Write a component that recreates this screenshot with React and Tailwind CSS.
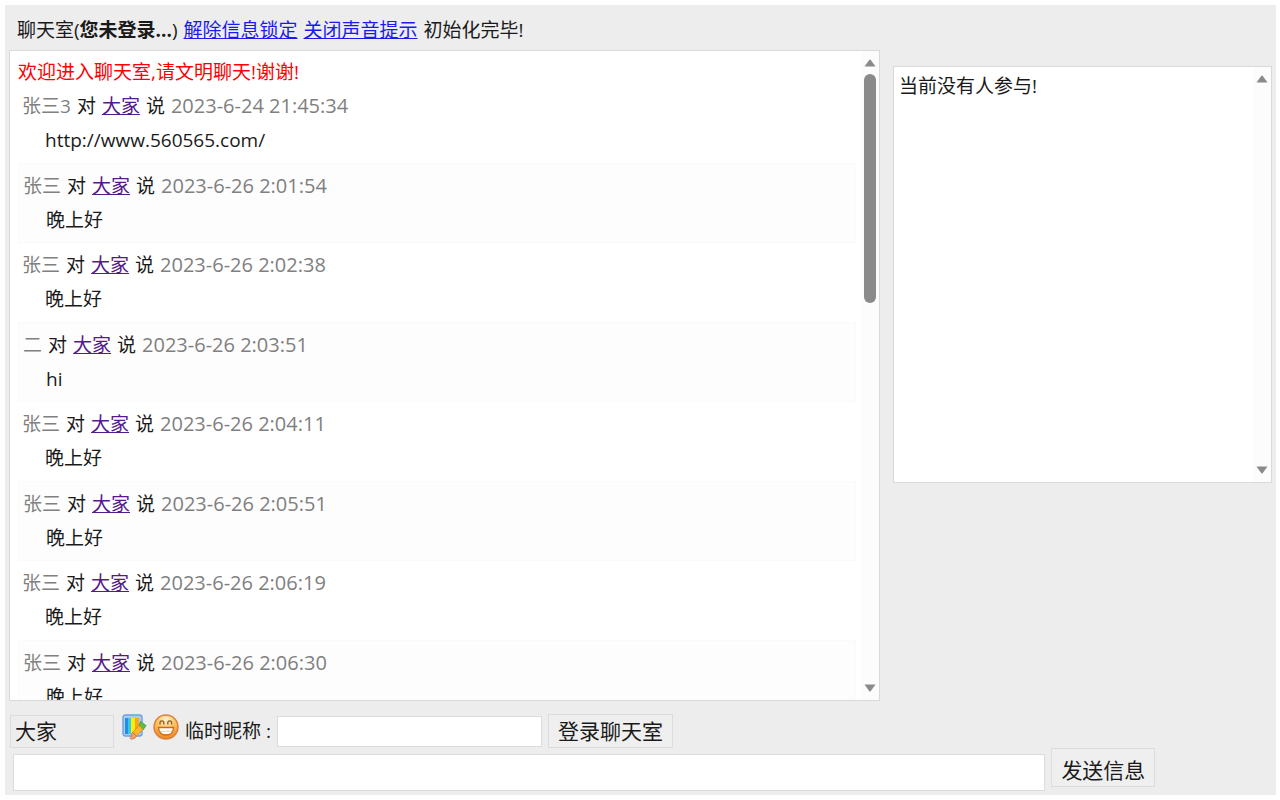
import { useState } from "react";

const MESSAGES = [
  { id: 1, from: "张三3", time: "2023-6-24 21:45:34", text: "http://www.560565.com/" },
  { id: 2, from: "张三", time: "2023-6-26 2:01:54", text: "晚上好" },
  { id: 3, from: "张三", time: "2023-6-26 2:02:38", text: "晚上好" },
  { id: 4, from: "二", time: "2023-6-26 2:03:51", text: "hi" },
  { id: 5, from: "张三", time: "2023-6-26 2:04:11", text: "晚上好" },
  { id: 6, from: "张三", time: "2023-6-26 2:05:51", text: "晚上好" },
  { id: 7, from: "张三", time: "2023-6-26 2:06:19", text: "晚上好" },
  { id: 8, from: "张三", time: "2023-6-26 2:06:30", text: "晚上好" },
];

function Arrow({ down }) {
  return (
    <svg viewBox="0 0 12 8" className="w-3 h-2 shrink-0" fill="#8a8a8a">
      {down ? <path d="M0.5 0.5h11L6.8 7a1 1 0 0 1-1.6 0z" /> : <path d="M0.5 7.5h11L6.8 1a1 1 0 0 0-1.6 0z" />}
    </svg>
  );
}

function ScrollTrack({ thumb }) {
  return (
    <div className="w-[18px] shrink-0 flex flex-col items-center justify-between bg-[#fcfcfc] py-2" aria-hidden="true">
      <Arrow />
      {thumb && (
        <div className="flex-1 w-3 py-[7px]">
          <div className="h-[38%] rounded-full bg-[#8a8a8a]" />
        </div>
      )}
      <Arrow down />
    </div>
  );
}

function PaletteIcon() {
  return (
    <svg viewBox="0 0 25 26" className="w-[25px] h-[26px]">
      <rect x="1" y="1" width="19" height="21" rx="2.5" fill="#a9cdf5" stroke="#6f9fe0" strokeWidth="1.4" />
      <rect x="3" y="4" width="3" height="16" fill="#1f8fe8" />
      <rect x="6" y="4" width="3" height="16" fill="#35c8ee" />
      <rect x="9" y="4" width="4" height="16" fill="#ffee00" />
      <rect x="13" y="4" width="4" height="16" fill="#ffa31a" />
      <path d="M18.5 7.5l5.5 4-3 4.5-4-4z" fill="#5fbf45" stroke="#3a9438" strokeWidth="0.8" />
      <path d="M17 11.5l4 4-6.5 6.5-4-3.5z" fill="#ffb62e" stroke="#d08a1c" strokeWidth="0.8" />
      <path d="M10.5 18.5l4 3.5c-1 2.5-3.5 3.3-5.5 3-1-.2-1-1.2-.5-1.6 1-.8.7-3.6 2-4.9z" fill="#f0a070" stroke="#c9703c" strokeWidth="0.8" />
    </svg>
  );
}

function SmileIcon() {
  return (
    <svg viewBox="0 0 26 26" className="w-[26px] h-[26px]">
      <defs>
        <radialGradient id="face" cx="0.5" cy="0.2" r="0.85">
          <stop offset="0" stopColor="#fff2cf" />
          <stop offset="0.5" stopColor="#fbbf5c" />
          <stop offset="1" stopColor="#ea7a1c" />
        </radialGradient>
      </defs>
      <circle cx="13" cy="13" r="12" fill="url(#face)" stroke="#dd8038" strokeWidth="1.4" />
      <path d="M7 10.5V8.8a1.9 1.9 0 0 1 3.8 0v1.7M14.8 10.5V8.8a1.9 1.9 0 0 1 3.8 0v1.7" fill="none" stroke="#8a5a20" strokeWidth="1.3" />
      <path d="M5.5 13.5h15c0 4.5-3 7.5-7.5 7.5s-7.5-3-7.5-7.5z" fill="#fff" stroke="#c96a18" strokeWidth="1.3" />
      <path d="M6.5 17.3h13" stroke="#f0c090" strokeWidth="0.8" />
    </svg>
  );
}

function Message({ msg, striped }) {
  return (
    <li className={striped ? "border border-[#fafafa] bg-[#fdfdfd] pl-1 pt-[5px] pb-1" : "pl-1 py-[5px]"}>
      <p className="flex gap-[6px] leading-[34px] text-[#808080]">
        <span>{msg.from}</span>
        <span className="text-[#1a1a1a]">对</span>
        <a href="#" className="text-[#551a8b] underline">大家</a>
        <span className="text-[#1a1a1a]">说</span>
        <span className="text-[20px]">{msg.time}</span>
      </p>
      <p className="pl-[23px] leading-[35px]">{msg.text}</p>
    </li>
  );
}

export default function App() {
  const [nickname, setNickname] = useState("");
  const [text, setText] = useState("");

  return (
    <div className="h-screen bg-white py-[5px] pl-[5px] pr-1 text-[19px] text-[#1a1a1a] font-['Open_Sans','Noto_Sans_CJK_SC',sans-serif]">
      <div className="h-full flex flex-col bg-[#ededed] px-1 pb-1">
        <header className="h-[45px] shrink-0 flex items-center gap-[6px] pl-2 pt-[6px] whitespace-nowrap">
          <span>聊天室(<b>您未登录...</b>)</span>
          <a href="#" className="text-[#1a1aee] underline">解除信息锁定</a>
          <a href="#" className="text-[#1a1aee] underline">关闭声音提示</a>
          <span>初始化完毕!</span>
        </header>

        <div className="flex-1 min-h-0 grid grid-cols-[871fr_379fr] grid-rows-[minmax(0,1fr)] gap-[13px]">
          <main className="flex border border-[#d9d9d9] bg-white overflow-hidden">
            <div className="flex-1 overflow-hidden pl-2 pr-[5px] pt-[9px]">
              <p className="leading-6 text-[#ff0000]">欢迎进入聊天室,请文明聊天!谢谢!</p>
              <ul>
                {MESSAGES.map((msg, i) => (
                  <Message key={msg.id} msg={msg} striped={i % 2 === 1} />
                ))}
              </ul>
            </div>
            <ScrollTrack thumb />
          </main>

          <aside className="mt-4 h-[417px] flex border border-[#d9d9d9] bg-white">
            <p className="flex-1 pl-[5px] pt-[7px] leading-6">当前没有人参与!</p>
            <ScrollTrack />
          </aside>
        </div>

        {/* Nickname and login */}
        <div className="shrink-0 flex items-center gap-[6px] pt-[13px] pl-px">
          <select aria-label="聊天对象" className="appearance-none w-[104px] h-[33px] mr-[2px] pl-1 border border-[#dcdcdc] bg-[#ededed] text-[21px] leading-[30px]">
            <option>大家</option>
          </select>
          <button type="button" aria-label="颜色" className="mb-2"><PaletteIcon /></button>
          <button type="button" aria-label="表情" className="mb-2"><SmileIcon /></button>
          <label htmlFor="nickname" className="whitespace-nowrap">临时昵称 :</label>
          <input
            id="nickname"
            value={nickname}
            onChange={(e) => setNickname(e.target.value)}
            className="w-[265px] h-[31px] px-1 border border-[#dcdcdc] bg-white"
          />
          <button type="button" className="h-[34px] px-[9px] border border-[#dcdcdc] bg-[#efefef] text-[21px] leading-[30px] whitespace-nowrap">
            登录聊天室
          </button>
        </div>

        {/* Message box */}
        <div className="shrink-0 flex items-start gap-[6px] pl-1">
          <input
            aria-label="信息"
            value={text}
            onChange={(e) => setText(e.target.value)}
            className="w-[82%] h-[37px] mt-[6px] px-1 border border-[#dcdcdc] bg-white"
          />
          <button type="button" className="h-[39px] px-[9px] pt-1 border border-[#dcdcdc] bg-[#efefef] text-[21px] leading-[30px] whitespace-nowrap">
            发送信息
          </button>
        </div>
      </div>
    </div>
  );
}
